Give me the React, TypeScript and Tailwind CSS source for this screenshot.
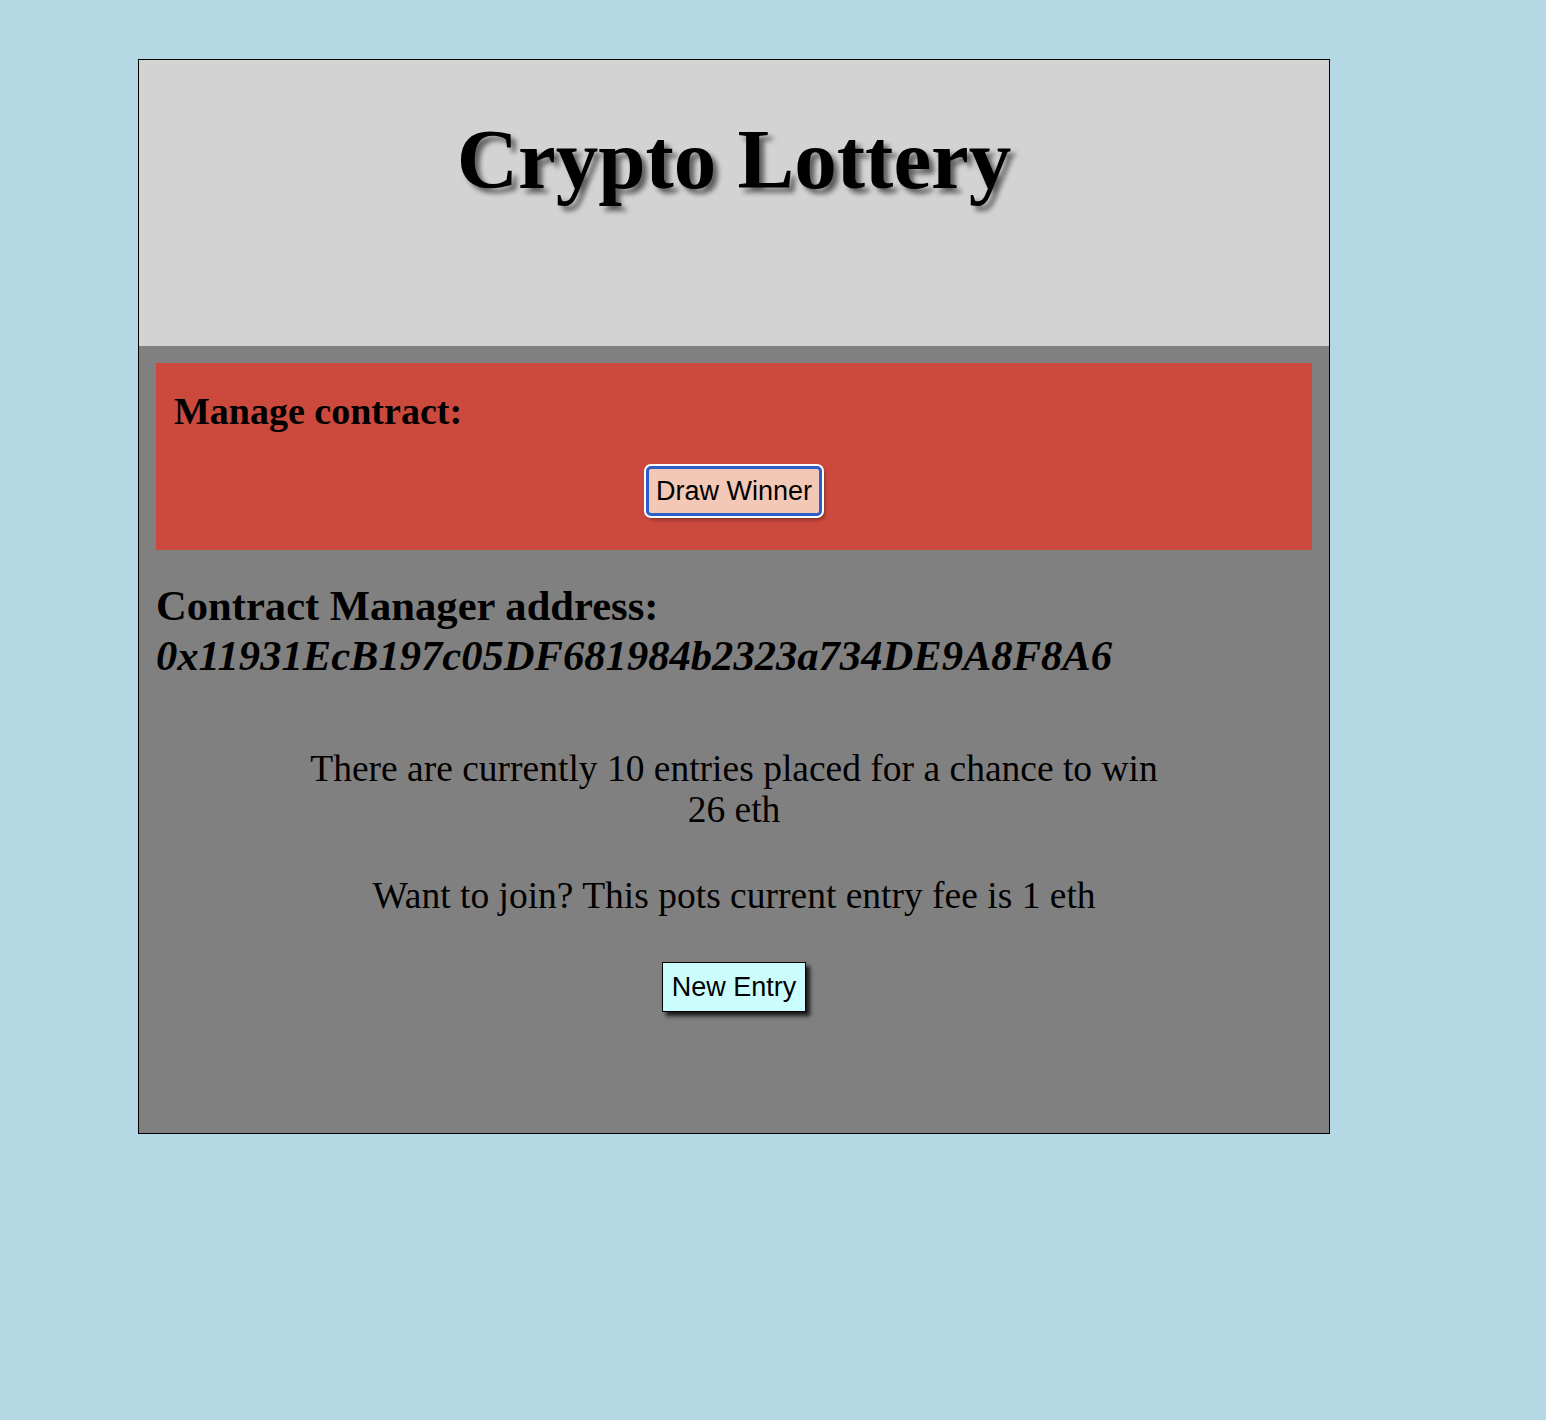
const serif = "font-['Liberation_Serif','Times_New_Roman',serif]";
const sans = "font-['Liberation_Sans',Arial,sans-serif]";

const managerAddress = "0x11931EcB197c05DF681984b2323a734DE9A8F8A6";

const ManagePanel = () => (
  <div className="bg-[#cc493d] px-[18px] pt-[26px] pb-[34px]">
    <h3 className={`${serif} text-[38px] leading-[44px] font-bold text-black`}>Manage contract:</h3>
    <div className="flex justify-center mt-[33px]">
      <button
        className={`${sans} h-[50px] px-[7px] rounded-[5px] border-[3px] border-[#2d5fc8] bg-[#f3c8b6] text-[27px] leading-none text-black ring-2 ring-white shadow-[2px_3px_4px_rgba(0,0,0,0.5)]`}
      >
        Draw Winner
      </button>
    </div>
  </div>
);

export default function App() {
  return (
    <div className="min-h-[1420px] bg-[#b5d9e4] pt-[59px] pl-[138px]">
      <div className="w-[1192px] border border-black">
        <header className="h-[286px] bg-[#d3d3d3] pt-[50px]">
          <h1
            className={`${serif} text-center text-[85px] leading-[98px] font-bold text-black [text-shadow:5px_5px_5px_rgba(0,0,0,0.55)]`}
          >
            Crypto Lottery
          </h1>
        </header>

        <main className="bg-[#808080] px-[17px] pt-[17px] pb-[121px]">
          <ManagePanel />

          <h2 className={`${serif} mt-[31px] text-[42.6px] leading-[50px] font-bold text-black`}>
            Contract Manager address:
            <em className="block">{managerAddress}</em>
          </h2>

          <p className={`${serif} mt-[67px] text-center text-[37.5px] leading-[41px] text-black`}>
            There are currently 10 entries placed for a chance to win
            <br />
            26 eth
          </p>

          <p className={`${serif} mt-[45px] text-center text-[37.5px] leading-[41px] text-black`}>
            Want to join? This pots current entry fee is 1 eth
          </p>

          <div className="flex justify-center mt-[46px]">
            <button
              className={`${sans} h-[50px] px-[9px] border border-black bg-[#ccfdfd] text-[27px] leading-none text-black shadow-[4px_4px_4px_rgba(0,0,0,0.8)]`}
            >
              New Entry
            </button>
          </div>
        </main>
      </div>
    </div>
  );
}
